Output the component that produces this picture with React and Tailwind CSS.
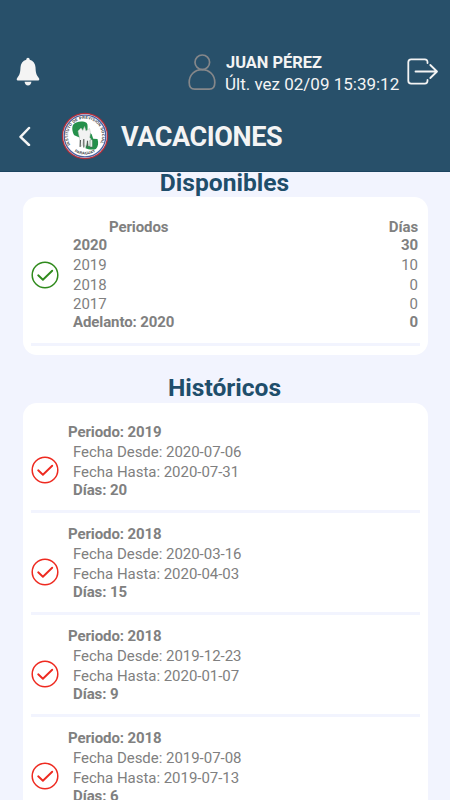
import React from 'react';

const available = [
  { label: '2020', days: 30, bold: true },
  { label: '2019', days: 10 },
  { label: '2018', days: 0 },
  { label: '2017', days: 0 },
  { label: 'Adelanto: 2020', days: 0, bold: true },
];

const history = [
  { period: '2019', from: '2020-07-06', to: '2020-07-31', days: 20 },
  { period: '2018', from: '2020-03-16', to: '2020-04-03', days: 15 },
  { period: '2018', from: '2019-12-23', to: '2020-01-07', days: 9 },
  { period: '2018', from: '2019-07-08', to: '2019-07-13', days: 6 },
];

const BellIcon = () => (
  <svg width="24" height="30" viewBox="0 0 24 30" fill="#f4f4f4">
    <path d="M12 .8c1 0 1.700.8 1.700 1.900 3.600.9 5.600 3.700 5.800 7.600.2 5.200.8 8 3.300 10.600.8.9.7 2.500-.6 2.500H1.800c-1.300 0-1.400-1.600-.6-2.500 2.500-2.600 3.100-5.400 3.300-10.600.2-3.900 2.200-6.700 5.800-7.600C10.300 1.600 11 .8 12 .8z" />
    <path d="M8.600 24.700h6.800c-.2 2.300-1.500 3.700-3.400 3.700s-3.200-1.400-3.400-3.700z" />
  </svg>
);

const UserIcon = () => (
  <svg width="28" height="38" viewBox="0 0 28 38" fill="none" stroke="#85878a" strokeWidth="1.700">
    <circle cx="14.300" cy="9.300" r="7.300" />
    <path d="M14 16.600C6.500 16.600 1.200 22 1.200 29.500c0 4.500 2 6.700 5.500 6.700h14.600c3.500 0 5.500-2.200 5.500-6.700 0-7.500-5.300-12.900-12.800-12.900z" />
  </svg>
);

const LogoutIcon = () => (
  <svg width="32" height="28" viewBox="0 0 32 28" fill="none" stroke="#f4f4f4" strokeWidth="1.800" strokeLinecap="round" strokeLinejoin="round">
    <path d="M20.500 5V4.200c0-1.700-.9-2.800-2.700-2.800H4.200C2.400 1.400 1.300 2.500 1.300 4.300v18.400c0 1.800 1.100 2.900 2.900 2.900h13.600c1.800 0 2.700-1.100 2.700-2.800V22" />
    <path d="M8.500 13.500h21.300M23.300 7l6.700 6.500-6.700 6.500" />
  </svg>
);

const Logo = () => (
  <svg width="48" height="48" viewBox="0 0 48 48">
    <circle cx="24" cy="24" r="23.200" fill="#b52f3b" />
    <circle cx="24" cy="24" r="21.900" fill="#f3f1f5" />
    <circle cx="24" cy="24" r="20.800" fill="#fff" stroke="#4b609f" strokeWidth="1.300" />
    <defs>
      <path id="ring-top" d="M9.300 32.700A17.100 17.100 0 1 1 38.700 32.700" />
      <path id="ring-bottom" d="M10.500 37A19.200 19.200 0 0 0 37.500 37" />
    </defs>
    <g fill="#34363a" fontFamily="Liberation Sans, sans-serif" fontWeight="700" fontSize="3.900">
      <text>
        <textPath href="#ring-top" textLength="70">INSTITUTO DE PREVISION SOCIAL</textPath>
      </text>
      <text textAnchor="middle">
        <textPath href="#ring-bottom" startOffset="50%" textLength="22">PARAGUAY</textPath>
      </text>
    </g>
    <path d="M12 13c2-3.500 10-4.500 13.700-2 1.500 1.800.5 4.700 1 7.700l4 3.500 1.500 4.500 4.300.3c1.200 3.700.8 7.700-1.600 10-3.400 1-7.600.6-10.400-.8l1-6-6.500-4.500-5.700-2.500c-1.800-2.600-2.800-7.300-1.300-10.200z" fill="#25904b" />
    <path d="M17 19l3-3 1.800 2.500 1.700-4 1.500 4.500 3.500-2.500 1 4-.8 5 1.300 1.500v7h-2.500l-1-6-1.500 6h-2l-.5-6-1.500 6h-2l-.7-9z" fill="#f2f2f2" stroke="#bcc5bf" strokeWidth=".5" />
    <path d="M19.500 28l-.4 7M22.800 27v8.500M26.500 29v6.500M30 29v7" stroke="#565c58" strokeWidth="1.100" />
    <path d="M29 29c0-2 2.500-2 2.500 0v6H29z" fill="#e8eee9" stroke="#3d7550" strokeWidth=".5" />
  </svg>
);

const CheckCircle = ({ className }) => (
  <svg className={className} width="28" height="28" viewBox="0 0 28 28" fill="none" stroke="currentColor">
    <circle cx="14" cy="14" r="12.800" strokeWidth="1.500" />
    <path d="M7.200 14.300l4.700 4.400 9.300-9" strokeWidth="1.900" strokeLinecap="round" strokeLinejoin="round" />
  </svg>
);

const HistoryRow = ({ item }) => (
  <div className="flex h-[102px] shrink-0 items-start border-b-[3px] border-[#f2f4fe]">
    <CheckCircle className="mt-[45px] shrink-0 text-[#ee2a20]" />
    <div className="ml-[9px] pt-3 text-[15px]">
      <p className="h-[19px] leading-[18px] font-bold tracking-[-0.1px]">Periodo: {item.period}</p>
      <div className="pl-[5px]">
        <p className="leading-5 tracking-[-0.03px]">Fecha Desde: {item.from}</p>
        <p className="leading-[21px] tracking-[-0.03px]">Fecha Hasta: {item.to}</p>
        <p className="-mt-[2px] leading-[18px] font-bold tracking-[-0.1px]">Días: {item.days}</p>
      </div>
    </div>
  </div>
);

const Header = () => (
  <header className="h-[172px] shrink-0 border-b border-[#1c4460] bg-[#28506a] pt-[52px] text-[#f4f4f4]">
    <div className="flex h-10 items-center pl-4">
      <BellIcon />
      <div className="ml-[148px]">
        <UserIcon />
      </div>
      <div className="ml-[9px] w-[182px] pt-[2px] whitespace-nowrap">
        <p className="pl-px text-[16.4px] leading-[21px] font-bold">JUAN PÉREZ</p>
        <p className="pt-px text-[17px] leading-[21px]">Últ. vez 02/09 15:39:12</p>
      </div>
      <LogoutIcon />
    </div>
    <div className="mt-5 flex h-12 items-center pl-[18px]">
      <svg width="13" height="20" viewBox="0 0 13 20" fill="none" stroke="#f4f4f4" strokeWidth="2.500" strokeLinecap="round" strokeLinejoin="round">
        <path d="M11 2L2.500 10.800 11 19" />
      </svg>
      <div className="ml-[30px]">
        <Logo />
      </div>
      <h1 className="ml-3 pt-px text-[27px] leading-8 font-bold tracking-[-0.4px]">VACACIONES</h1>
    </div>
  </header>
);

export default function App() {
  return (
    <div className="flex h-[800px] w-[450px] flex-col overflow-hidden bg-[#f2f4fe] font-['Roboto',sans-serif] text-[#808080]">
      <Header />
      <main className="flex min-h-0 flex-1 flex-col pr-[22px] pl-[23px]">
        <h2 className="-mt-[3px] h-7 shrink-0 pr-[2px] text-center text-[24.6px] leading-7 font-bold text-[#1f4e6b]">Disponibles</h2>
        <section className="h-[158px] shrink-0 rounded-[14px] bg-white px-2">
          <div className="flex h-[149px] border-b-[3px] border-[#f2f4fe]">
            <CheckCircle className="mt-16 shrink-0 text-[#2f8a1c]" />
            <div className="ml-[14px] flex-1 pt-[21px] pr-[2px] text-[15px]">
              <div className="flex justify-between pl-9 leading-[18px] font-bold tracking-[-0.1px]">
                <span>Periodos</span>
                <span>Días</span>
              </div>
              {available.map((row) => (
                <div
                  key={row.label}
                  className={row.bold ? 'flex h-[18px] justify-between leading-[18px] font-bold tracking-[-0.1px]' : 'flex h-[19.7px] justify-between leading-[22px]'}
                >
                  <span>{row.label}</span>
                  <span>{row.days}</span>
                </div>
              ))}
            </div>
          </div>
        </section>
        <h2 className="mt-[18px] h-[30px] shrink-0 pr-[2px] text-center text-[24.6px] leading-[30px] font-bold text-[#1f4e6b]">Históricos</h2>
        <section className="flex min-h-0 flex-1 flex-col overflow-hidden rounded-t-[14px] bg-white px-2 pt-2">
          {history.map((item) => (
            <HistoryRow key={item.from} item={item} />
          ))}
        </section>
      </main>
    </div>
  );
}
